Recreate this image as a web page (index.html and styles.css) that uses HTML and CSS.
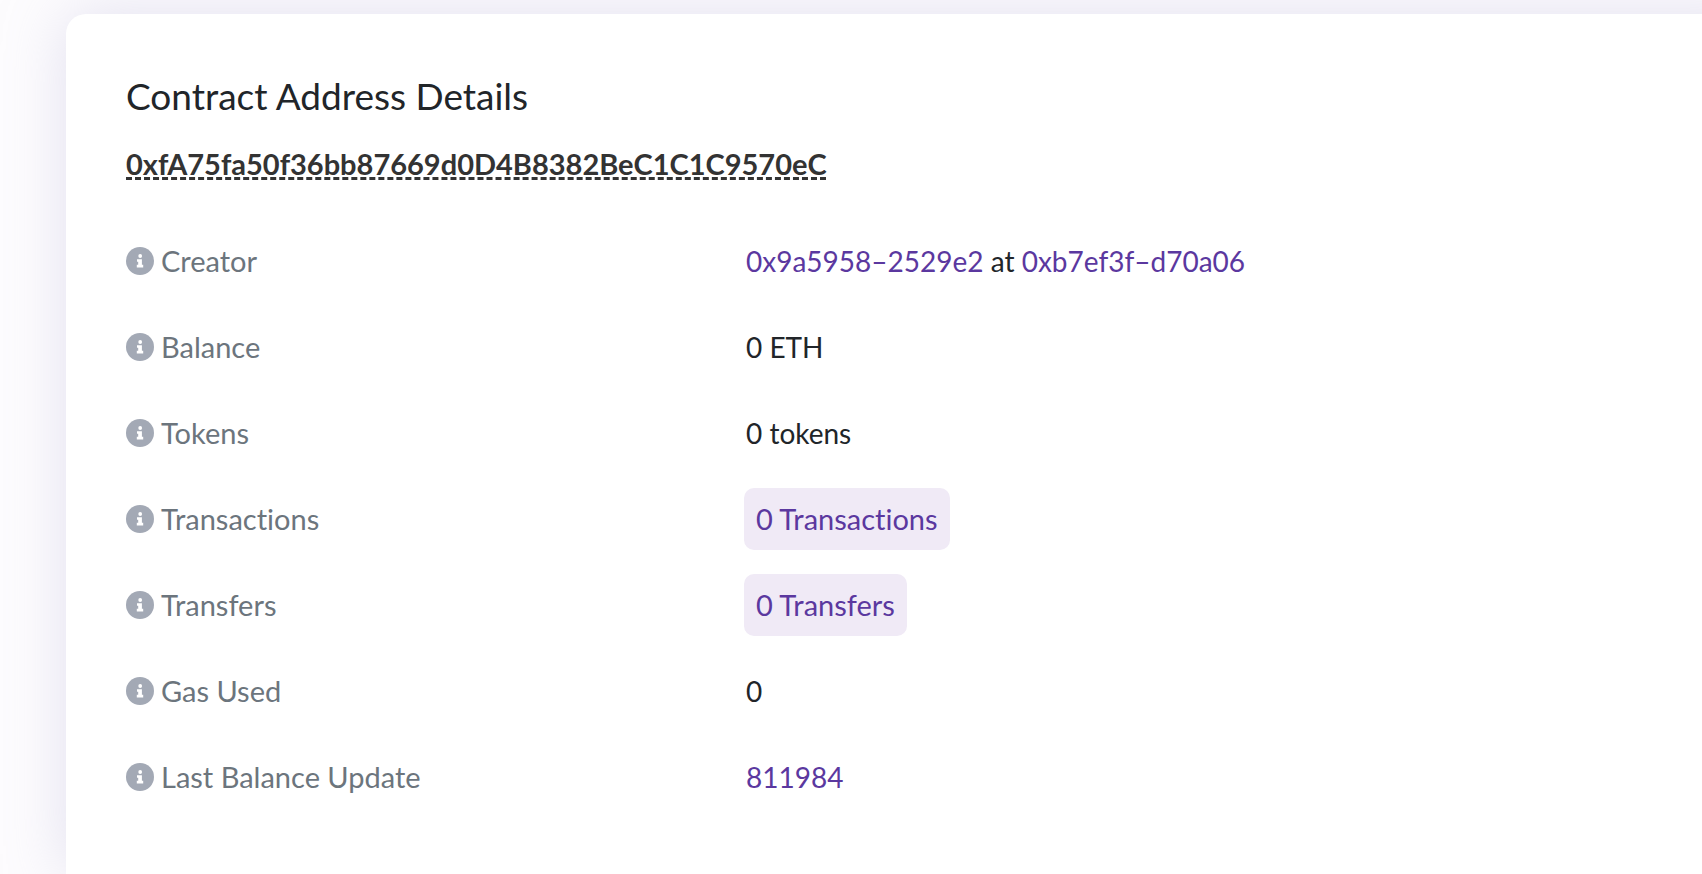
FILE: index.html
```html
<!DOCTYPE html>
<html lang="en">
<head>
<meta charset="utf-8">
<title>Contract Address Details</title>
<link rel="stylesheet" href="styles.css">
</head>
<body>
<svg class="defs" aria-hidden="true">
  <symbol id="info" viewBox="0 0 28 28">
    <circle cx="14" cy="14" r="14" fill="#a3a9b5"/>
    <circle cx="14.2" cy="9" r="1.9" fill="#fff"/>
    <path d="M11 12.2h4.9v5.6h1.3v2.6h-6.4v-2.6h1.4v-3H11z" fill="#fff"/>
  </symbol>
</svg>
<main class="card">
  <h1 class="title">Contract Address Details</h1>
  <h2 class="address"><span class="hash">0xfA75fa50f36bb87669d0D4B8382BeC1C1C9570eC</span></h2>
  <dl class="details">
    <div class="row">
      <dt class="label"><svg class="icon" aria-hidden="true"><use href="#info"/></svg>Creator</dt>
      <dd class="value"><a class="link" href="#">0x9a5958–2529e2</a> at <a class="link" href="#">0xb7ef3f–d70a06</a></dd>
    </div>
    <div class="row">
      <dt class="label"><svg class="icon" aria-hidden="true"><use href="#info"/></svg>Balance</dt>
      <dd class="value">0 ETH</dd>
    </div>
    <div class="row">
      <dt class="label"><svg class="icon" aria-hidden="true"><use href="#info"/></svg>Tokens</dt>
      <dd class="value">0 tokens</dd>
    </div>
    <div class="row">
      <dt class="label"><svg class="icon" aria-hidden="true"><use href="#info"/></svg>Transactions</dt>
      <dd class="value"><a class="link chip" href="#">0 Transactions</a></dd>
    </div>
    <div class="row">
      <dt class="label"><svg class="icon" aria-hidden="true"><use href="#info"/></svg>Transfers</dt>
      <dd class="value"><a class="link chip" href="#">0 Transfers</a></dd>
    </div>
    <div class="row">
      <dt class="label"><svg class="icon" aria-hidden="true"><use href="#info"/></svg>Gas Used</dt>
      <dd class="value">0</dd>
    </div>
    <div class="row">
      <dt class="label"><svg class="icon" aria-hidden="true"><use href="#info"/></svg>Last Balance Update</dt>
      <dd class="value"><a class="link" href="#">811984</a></dd>
    </div>
  </dl>
</main>
</body>
</html>
```
FILE: styles.css
```css
* {
  box-sizing: border-box;
}

body {
  margin: 0;
  min-height: 100vh;
  padding: 14px 0 0 66px;
  display: flex;
  overflow: hidden;
  background: #fdfcfe;
  color: #212529;
  font-family: Lato, "Open Sans", sans-serif;
  font-size: 28px;
  font-variant-ligatures: none;
  line-height: 42px;
}

.defs {
  position: absolute;
  width: 0;
  height: 0;
}

.card {
  flex: 1;
  margin-right: -60px;
  padding: 58px 60px 48px;
  border-radius: 20px 0 0 0;
  background: #fff;
  box-shadow: 0 0 60px rgba(202, 199, 226, 0.5);
}

.title {
  margin: 0 0 20px;
  font-size: 37px;
  font-weight: 400;
  line-height: 48px;
}

.address {
  margin: 0 0 42px;
  color: #333;
  font-size: 29px;
  font-weight: 700;
  line-height: 48px;
}

.hash {
  text-decoration: underline dashed 3px;
  text-decoration-skip-ink: none;
  text-underline-offset: 2px;
}

.details {
  margin: 0;
  display: grid;
  gap: 24px;
}

.row {
  display: grid;
  grid-template-columns: 618px 1fr;
  align-items: center;
  min-height: 62px;
}

.label {
  display: flex;
  align-items: center;
  gap: 7px;
  color: #6c757d;
  font-size: 29px;
}

.icon {
  width: 28px;
  height: 28px;
}

.value {
  margin: 0;
  padding-left: 2px;
}

.link {
  color: #5b389f;
  text-decoration: none;
}

.chip {
  display: block;
  width: fit-content;
  margin-left: -2px;
  padding: 10px 12px;
  border-radius: 10px;
  background: #f0eaf6;
  font-size: 29px;
}
```
